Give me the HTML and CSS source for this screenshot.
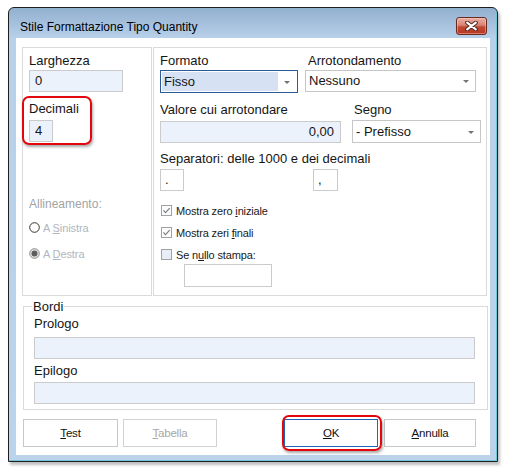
FILE: index.html
```html
<!DOCTYPE html>
<html lang="it">
<head>
<meta charset="utf-8">
<title>Stile Formattazione Tipo Quantity</title>
<link rel="stylesheet" href="styles.css">
</head>
<body>
<div class="screen">
  <div class="window">
    <div class="titlebar">
      <span class="title">Stile Formattazione Tipo Quantity</span>
      <div class="close">
        <svg width="13" height="10" viewBox="0 0 13 10"><path d="M2.2 1.6 L10.8 8.4 M10.8 1.6 L2.2 8.4" stroke="#4a2520" stroke-width="4" stroke-linecap="round" fill="none"/><path d="M2.2 1.6 L10.8 8.4 M10.8 1.6 L2.2 8.4" stroke="#ffffff" stroke-width="2.2" stroke-linecap="round" fill="none"/></svg>
      </div>
    </div>
    <div class="client">
      <div class="panels">
        <div class="panel panel-left">
          <div class="lbl">Larghezza</div>
          <div class="input input-blue w-larghezza">0</div>
          <div class="lbl lbl-decimali">Decimali</div>
          <div class="input input-blue w-decimali">4</div>
          <div class="lbl-dis">Allineamento:</div>
          <div class="opt opt-first">
            <svg width="11" height="11" viewBox="0 0 11 11"><circle cx="5.5" cy="5.5" r="4.8" fill="#fff" stroke="#333" stroke-width="1"/></svg>
            <span class="opt-dis">A <u>S</u>inistra</span>
          </div>
          <div class="opt opt-second">
            <svg width="11" height="11" viewBox="0 0 11 11"><circle cx="5.5" cy="5.5" r="4.8" fill="#e6e6e6" stroke="#8a8a8a" stroke-width="1"/><circle cx="5.5" cy="5.5" r="3" fill="#5c5c5c"/></svg>
            <span class="opt-dis">A <u>D</u>estra</span>
          </div>
        </div>
        <div class="panel panel-right">
          <div class="row">
            <div class="field f-formato">
              <div class="lbl">Formato</div>
              <div class="combo combo-focus w-formato"><span class="combo-text">Fisso</span><span class="combo-btn"><span class="arrow"></span></span></div>
            </div>
            <div class="field">
              <div class="lbl ind3">Arrotondamento</div>
              <div class="combo w-arrot"><span class="combo-text">Nessuno</span><span class="combo-btn"><span class="arrow"></span></span></div>
            </div>
          </div>
          <div class="row row2">
            <div class="field f-valore">
              <div class="lbl">Valore cui arrotondare</div>
              <div class="input input-blue w-valore align-right">0,00</div>
            </div>
            <div class="field f-segno">
              <div class="lbl ind2">Segno</div>
              <div class="combo w-segno"><span class="combo-text">- Prefisso</span><span class="combo-btn"><span class="arrow"></span></span></div>
            </div>
          </div>
          <div class="lbl lbl-sep">Separatori: delle 1000 e dei decimali</div>
          <div class="row row3">
            <div class="input w-sep">.</div>
            <div class="input w-sep2 sep-gap">,</div>
          </div>
          <div class="chk chk-first">
            <svg width="11" height="11" viewBox="0 0 11 11"><rect x="0.5" y="0.5" width="10" height="10" fill="#fbfcfe" stroke="#a2a2a2"/><path d="M2.4 5.4 L4.5 7.6 L8.7 3.2" stroke="#7b7b7b" stroke-width="1.1" fill="none"/></svg>
            <span>Mostra zero <u>i</u>niziale</span>
          </div>
          <div class="chk">
            <svg width="11" height="11" viewBox="0 0 11 11"><rect x="0.5" y="0.5" width="10" height="10" fill="#fbfcfe" stroke="#a2a2a2"/><path d="M2.4 5.4 L4.5 7.6 L8.7 3.2" stroke="#7b7b7b" stroke-width="1.1" fill="none"/></svg>
            <span>Mostra zeri <u>f</u>inali</span>
          </div>
          <div class="chk">
            <svg width="11" height="11" viewBox="0 0 11 11"><rect x="0.5" y="0.5" width="10" height="10" fill="#e9eef6" stroke="#a2a2a2"/></svg>
            <span>Se n<u>u</u>llo stampa:</span>
          </div>
          <div class="input w-nullo"></div>
        </div>
      </div>

      <div class="group">
        <span class="legend">Bordi</span>
        <div class="lbl">Prologo</div>
        <div class="input input-blue w-bordi"></div>
        <div class="lbl lbl-epilogo">Epilogo</div>
        <div class="input input-blue w-bordi w-epilogo"></div>
      </div>

      <div class="buttons">
        <div class="btn w-test"><span><u>T</u>est</span></div>
        <div class="btn btn-disabled w-tabella"><span><u>T</u>abella</span></div>
        <div class="btn btn-default w-ok"><span><u>O</u>K</span></div>
        <div class="btn w-annulla"><span><u>A</u>nnulla</span></div>
      </div>

      <div class="annot annot-dec"></div>
      <div class="annot annot-ok"></div>
    </div>
  </div>
</div>
</body>
</html>
```

FILE: styles.css
```css
* { box-sizing: border-box; }

html, body {
  margin: 0;
  padding: 0;
  background: #ffffff;
}

body {
  font-family: "Liberation Sans", Arial, sans-serif;
  color: #151515;
}

.screen {
  width: 506px;
  height: 471px;
  padding: 7px 0 0 8px;
  background: #ffffff;
  overflow: hidden;
}

.window {
  width: 490px;
  height: 455px;
  border: 1px solid #1f1f1f;
  border-radius: 6px 6px 0 0;
  background: linear-gradient(to bottom, #92b0d0 0px, #b8d0e9 30px, #bbd3eb 100%);
  padding: 0 7px 6px 7px;
  box-shadow: 2px 3px 3px rgba(0, 0, 0, 0.25), inset -1px -1px 0 #6fc6d8;
}

.titlebar {
  height: 30px;
  margin: 0 -7px;
  display: flex;
  align-items: flex-start;
  justify-content: space-between;
}

.title {
  font-size: 12px;
  line-height: 14px;
  margin: 12px 0 0 11px;
  color: #000;
}

.close {
  width: 31px;
  height: 18px;
  margin: 9px 10px 0 0;
  border: 1px solid #6a2a22;
  border-radius: 3px;
  background: linear-gradient(to bottom, #e9afa3 0%, #d98474 45%, #c24a34 55%, #b8351f 100%);
  box-shadow: inset 0 0 0 1px rgba(255, 210, 200, 0.45);
  display: flex;
  align-items: center;
  justify-content: center;
}

.client {
  position: relative;
  width: 474px;
  height: 417px;
  background: #ffffff;
  padding-top: 9px;
}

.panels {
  display: flex;
  gap: 1px;
  padding-left: 6px;
}

.panel {
  height: 249px;
  border: 1px solid #dadada;
  padding-top: 5px;
}

.panel-left {
  width: 130px;
  padding-left: 6px;
}

.panel-right {
  width: 334px;
  padding-left: 6px;
}

.lbl {
  font-size: 13px;
  line-height: 15px;
  height: 15px;
  white-space: nowrap;
}

.ind3 { padding-left: 3px; }
.ind2 { padding-left: 2px; }

.input {
  height: 22px;
  border: 1px solid #cbcbcb;
  background: #ffffff;
  font-size: 13px;
  line-height: 20px;
  padding: 0 5px;
  margin-top: 2px;
  white-space: nowrap;
}

.input-blue { background: #ebf2fb; }

.align-right { text-align: right; }

.w-larghezza { width: 94px; }
.lbl-decimali { margin-top: 9px; }
.w-decimali { width: 24px; margin-top: 4px; }

.lbl-dis {
  font-size: 12px;
  line-height: 15px;
  color: #a3a3a3;
  margin-top: 55px;
}

.opt {
  display: flex;
  align-items: center;
  height: 15px;
  gap: 3px;
}

.opt-first { margin-top: 8px; }
.opt-second { margin-top: 11px; }

.opt-dis {
  font-size: 11px;
  color: #b0b6c0;
  letter-spacing: -0.1px;
}

.row {
  display: flex;
}

.f-formato { width: 145px; }
.f-valore { width: 192px; }

.combo {
  height: 22px;
  margin-top: 2px;
  border: 1px solid #c6c6c6;
  background: #ffffff;
  display: flex;
  font-size: 13px;
  line-height: 20px;
}

.combo-text {
  flex: 1;
  padding-left: 3px;
  white-space: nowrap;
}

.combo-btn {
  width: 18px;
  display: flex;
  align-items: center;
  justify-content: center;
}

.arrow {
  width: 0;
  height: 0;
  border-left: 3px solid transparent;
  border-right: 3px solid transparent;
  border-top: 3px solid #747474;
  margin-top: 1px;
}

.combo-focus {
  height: 23px;
  border-color: #2c5a99;
  padding: 1px;
}

.combo-focus .combo-text {
  background: #d6e2f3;
  line-height: 19px;
  padding-left: 2px;
}

.w-formato { width: 138px; }
.w-arrot { width: 171px; }

.row2 { margin-top: 9px; }
.row2 .input { margin-top: 4px; }
.w-valore { width: 181px; padding-right: 6px; }

.f-segno .combo {
  margin-top: 3px;
  height: 23px;
  line-height: 21px;
}
.w-segno { width: 129px; }

.lbl-sep { margin-top: 8px; }

.row3 .input { margin-top: 3px; height: 22px; }
.w-sep { width: 24px; padding-left: 4px; }
.w-sep2 { width: 25px; padding-left: 4px; }
.sep-gap { margin-left: 129px; }

.chk {
  display: flex;
  align-items: center;
  height: 15px;
  gap: 4px;
  margin-top: 7px;
  padding-left: 1px;
  font-size: 11px;
  letter-spacing: -0.15px;
  color: #1a1a1a;
  white-space: nowrap;
}

.chk-first { margin-top: 12px; }

.w-nullo {
  width: 88px;
  margin-left: 24px;
  margin-top: 2px;
  height: 23px;
}

.group {
  position: relative;
  margin: 10px 0 0 7px;
  width: 465px;
  height: 104px;
  border: 1px solid #dadada;
  padding: 9px 0 0 10px;
}

.legend {
  position: absolute;
  top: -8px;
  left: 8px;
  padding: 0 1px;
  background: #ffffff;
  font-size: 13px;
  line-height: 15px;
}

.group .input { margin-top: 6px; }
.w-bordi { width: 441px; }
.lbl-epilogo { margin-top: 4px; }
.group .w-epilogo { margin-top: 4px; }

.buttons {
  display: flex;
  margin-top: 9px;
  padding-left: 7px;
}

.btn {
  height: 28px;
  border: 1px solid #c8c8c8;
  background: #ffffff;
  display: flex;
  align-items: center;
  justify-content: center;
  font-size: 11.5px;
  letter-spacing: -0.2px;
  color: #111;
}

.btn-disabled {
  color: #a8a8a8;
  border-color: #d2d2d2;
}

.btn-default {
  border-color: #1e64b8;
}

.w-test { width: 95px; }
.w-tabella { width: 94px; margin-left: 5px; }
.w-ok { width: 94px; margin-left: 67px; }
.w-annulla { width: 92px; margin-left: 6px; }

.annot {
  position: absolute;
  border: 2px solid #e3070d;
  border-radius: 7px;
  box-shadow: 1px 2px 3px rgba(0, 0, 0, 0.35);
}

.annot-dec {
  left: 6px;
  top: 58px;
  width: 70px;
  height: 49px;
}

.annot-ok {
  left: 266px;
  top: 377px;
  width: 100px;
  height: 36px;
}
```
